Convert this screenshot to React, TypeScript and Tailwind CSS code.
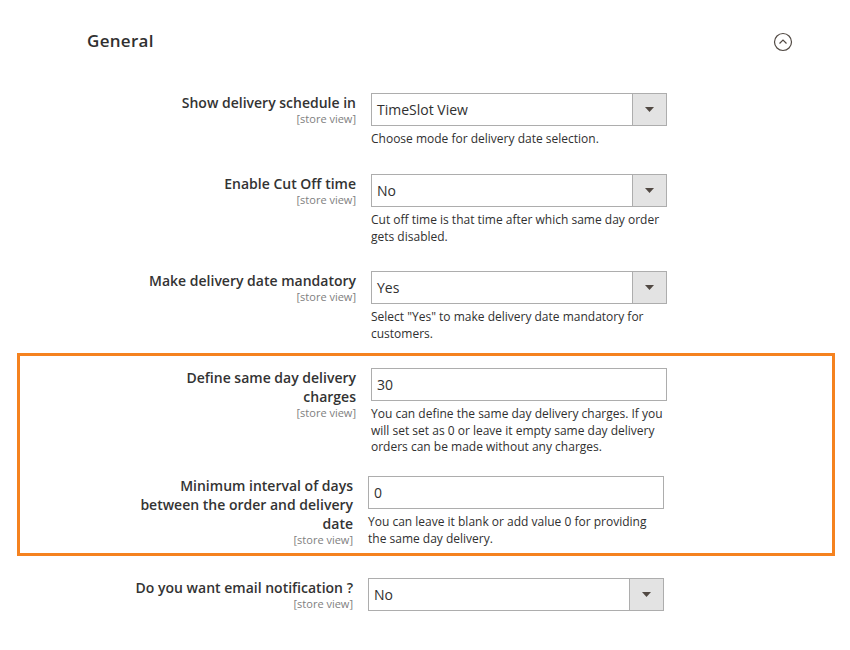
type Field = {
  label: React.ReactNode;
  kind: "select" | "input";
  value: string;
  help: React.ReactNode;
  rowClass: string;
  labelClass: string;
};

function Control({ kind, value }: { kind: "select" | "input"; value: string }) {
  if (kind === "input") {
    return (
      <div className="h-[33px] w-[296px] border border-[#adadad] bg-white pl-[5px] flex items-center text-[14px] text-[#303030]">
        {value}
      </div>
    );
  }
  return (
    <div className="h-[33px] w-[296px] border border-[#adadad] bg-white flex items-stretch text-[14px] text-[#303030]">
      <div className="flex-1 pl-[5px] flex items-center">{value}</div>
      <div className="w-[34px] border-l border-[#adadad] bg-[#e3e3e3] flex items-center justify-center">
        <svg width="9" height="5" viewBox="0 0 9 5">
          <path d="M0 0h9L4.5 5z" fill="#514943" />
        </svg>
      </div>
    </div>
  );
}

function Row({ f }: { f: Field }) {
  return (
    <div className={`flex ${f.rowClass}`}>
      <div className={`${f.labelClass} flex flex-col items-end text-right`}>
        <div className="text-[14px] leading-[19px] font-semibold text-[#333333]">{f.label}</div>
        <div className="text-[11px] leading-[14px] text-[#808080]">[store view]</div>
      </div>
      <div className="ml-[15px] w-[296px]">
        <Control kind={f.kind} value={f.value} />
        {f.help && <p className="mt-[5px] text-[12px] leading-[16.5px] text-[#303030]">{f.help}</p>}
      </div>
    </div>
  );
}

export default function App() {
  const top: Field[] = [
    {
      label: "Show delivery schedule in",
      kind: "select",
      value: "TimeSlot View",
      help: "Choose mode for delivery date selection.",
      rowClass: "mt-[40px]",
      labelClass: "w-[356px]",
    },
    {
      label: "Enable Cut Off time",
      kind: "select",
      value: "No",
      help: (
        <>
          Cut off time is that time after which same day order
          <br />
          gets disabled.
        </>
      ),
      rowClass: "mt-[26.5px]",
      labelClass: "w-[356px]",
    },
    {
      label: "Make delivery date mandatory",
      kind: "select",
      value: "Yes",
      help: (
        <>
          Select "Yes" to make delivery date mandatory for
          <br />
          customers.
        </>
      ),
      rowClass: "mt-[26px]",
      labelClass: "w-[356px]",
    },
  ];

  const boxed: Field[] = [
    {
      label: (
        <>
          Define same day delivery
          <br />
          charges
        </>
      ),
      kind: "input",
      value: "30",
      help: (
        <>
          You can define the same day delivery charges. If you
          <br />
          will set set as 0 or leave it empty same day delivery
          <br />
          orders can be made without any charges.
        </>
      ),
      rowClass: "mt-[12px]",
      labelClass: "w-[336px]",
    },
    {
      label: (
        <>
          Minimum interval of days
          <br />
          between the order and delivery
          <br />
          date
        </>
      ),
      kind: "input",
      value: "0",
      help: (
        <>
          You can leave it blank or add value 0 for providing
          <br />
          the same day delivery.
        </>
      ),
      rowClass: "mt-[20.5px]",
      labelClass: "w-[333px]",
    },
  ];

  const last: Field = {
    label: "Do you want email notification ?",
    kind: "select",
    value: "No",
    help: "",
    rowClass: "mt-[22px]",
    labelClass: "w-[353px]",
  };

  return (
    <div className="w-[850px] h-[650px] bg-white overflow-hidden pt-[29px] font-['Open_Sans',sans-serif]">
      <div className="flex items-center justify-between pl-[87px] pr-[57px]">
        <h2 className="text-[17px] leading-[24px] font-semibold tracking-[0.3px] text-[#303030]">General</h2>
        <svg width="20" height="20" viewBox="0 0 20 20" className="mt-[2px]">
          <circle cx="10" cy="10" r="8.5" fill="none" stroke="#514943" strokeWidth="1.2" />
          <path d="M6.5 11.5L10 8l3.5 3.5" fill="none" stroke="#514943" strokeWidth="1.2" />
        </svg>
      </div>

      {top.map((f, i) => (
        <Row key={i} f={f} />
      ))}

      <div className="ml-[17px] mt-[11px] w-[818px] border-[3px] border-[#f5821f] pb-[6px]">
        {boxed.map((f, i) => (
          <Row key={i} f={f} />
        ))}
      </div>

      <Row f={last} />
    </div>
  );
}
